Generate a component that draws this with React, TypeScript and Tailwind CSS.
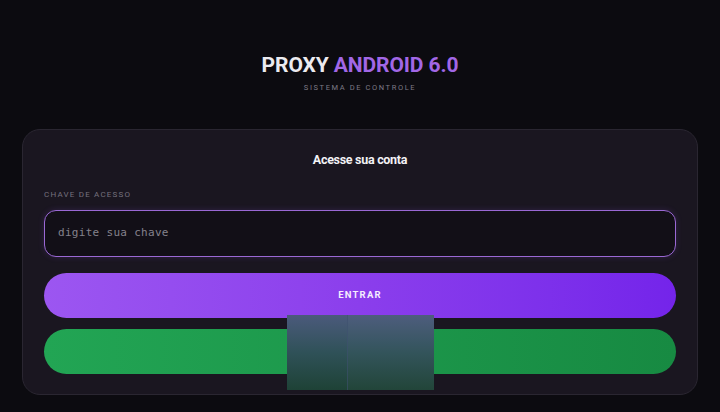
export default function App() {
  return (
    <div
      className="min-h-[412px] w-full bg-[#0c0b10] flex flex-col items-center pt-[52px] px-[22px]"
      style={{ fontFamily: "Roboto, Inter, 'Noto Sans', sans-serif" }}
    >
      <h1 className="text-[21px] leading-[26px] font-bold tracking-[-0.1px] text-[#ecebf0]">
        PROXY <span className="text-[#a267e6]">ANDROID 6.0</span>
      </h1>
      <p className="mt-[5px] text-[7.5px] leading-[10px] tracking-[1.6px] text-[#7d7a86]">
        SISTEMA DE CONTROLE
      </p>

      <div className="relative mt-[36px] w-full rounded-[18px] border border-[#2a2631] bg-[#1a1620] px-[21px] pt-[22px] pb-[20px]">
        <h2 className="text-center text-[12.5px] leading-[16px] font-bold tracking-[-0.3px] text-[#f3f2f6]">
          Acesse sua conta
        </h2>

        <label className="mt-[22px] block text-[8px] leading-[10px] tracking-[1.2px] text-[#75717e]">
          CHAVE DE ACESSO
        </label>
        <div className="mt-[10px] h-[47px] rounded-[12px] border border-[#9a68d4] bg-[#120f17] flex items-center px-[13px] shadow-[0_0_6px_rgba(140,80,220,0.2)]">
          <span
            className="text-[11px] tracking-[0.3px] text-[#85828c]"
            style={{ fontFamily: "'DejaVu Sans Mono', 'Liberation Mono', monospace" }}
          >
            digite sua chave
          </span>
        </div>

        <button className="mt-[16px] block h-[45px] w-full rounded-full bg-gradient-to-r from-[#9c56f1] via-[#8b3eec] to-[#7424ea] text-[9.5px] font-bold tracking-[1.2px] text-[#f5eefe]">
          ENTRAR
        </button>
        <button className="mt-[11px] block h-[45px] w-full rounded-full bg-gradient-to-r from-[#22a554] to-[#178a42]" />

        <div className="absolute left-[264px] top-[185px] h-[75px] w-[147px] flex bg-gradient-to-b from-[#4b5a7c] via-[#2f5158] to-[#1e4236]">
          <div className="w-[61px] h-full border-r border-[#3f5270]/60" />
          <div className="flex-1 h-full bg-white/[0.02]" />
        </div>
      </div>
    </div>
  );
}
